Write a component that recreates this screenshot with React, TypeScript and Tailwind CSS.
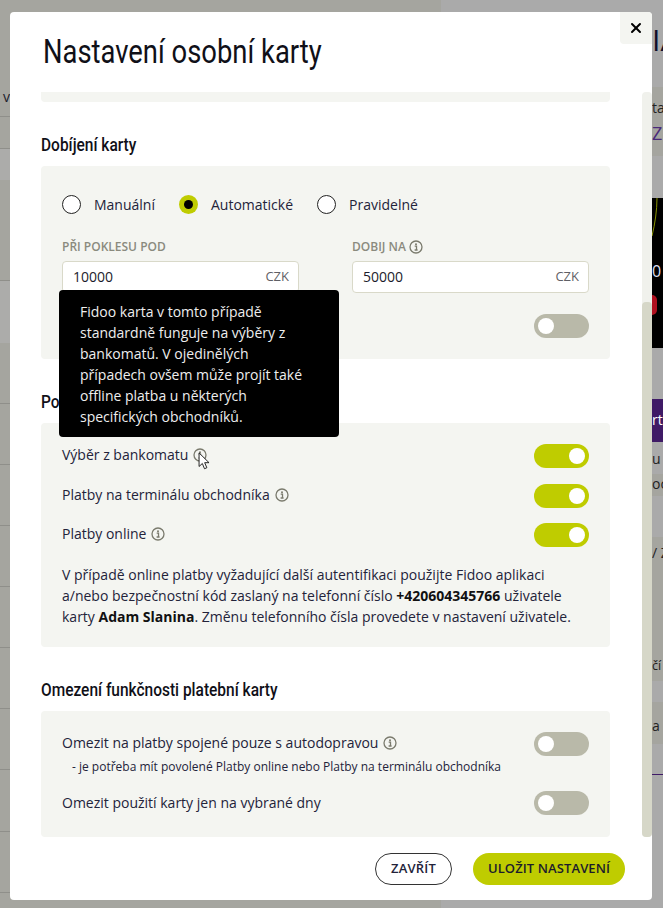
import React from "react";
import { X } from "lucide-react";

const InfoIcon = ({ className = "" }: { className?: string }) => (
  <svg viewBox="0 0 14 14" className={`w-[14px] h-[14px] inline-block flex-shrink-0 ${className}`} fill="none">
    <circle cx="7" cy="7" r="6" stroke="#7a7a6d" strokeWidth="1.3" />
    <circle cx="7" cy="4.2" r="1" fill="#7a7a6d" />
    <path d="M5.7 6.2H7.5V9.7M5.6 10H8.6" stroke="#7a7a6d" strokeWidth="1.3" />
  </svg>
);

const Toggle = ({ on = false }: { on?: boolean }) => (
  <div className={`w-[55px] h-[24px] rounded-full flex items-center px-1 flex-shrink-0 ${on ? "bg-[#bfcc00] justify-end" : "bg-[#b9b9a9] justify-start"}`}>
    <div className="w-4 h-4 rounded-full bg-white" />
  </div>
);

const Radio = ({ label, checked = false }: { label: string; checked?: boolean }) => (
  <div className="flex items-center gap-[13px]">
    {checked ? (
      <div className="w-[19px] h-[19px] rounded-full bg-[#bfcc00] flex items-center justify-center">
        <div className="w-[9px] h-[9px] rounded-full bg-black" />
      </div>
    ) : (
      <div className="w-[19px] h-[19px] rounded-full border border-[#222] bg-white" />
    )}
    <span className="text-sm text-[#23233a] pt-px">{label}</span>
  </div>
);

const AmountField = ({ value }: { value: string }) => (
  <div className="h-8 mt-[6px] bg-white border border-[#d9d9c9] rounded-[4px] flex items-center justify-between pl-[10px] pr-[9px]">
    <span className="text-sm text-[#1c1c2c]">{value}</span>
    <span className="text-[13px] text-[#5f5f66] pb-px">CZK</span>
  </div>
);

const SectionTitle = ({ children }: { children: React.ReactNode }) => (
  <h2 className="h-6 mt-[30px] mb-[10px] flex items-center whitespace-nowrap">
    <span className="text-[18px] font-medium text-[#101018] font-['Roboto',sans-serif] origin-left scale-x-[0.86]">{children}</span>
  </h2>
);

const SettingRow = ({ label, info = true, on = false, className = "" }: { label: string; info?: boolean; on?: boolean; className?: string }) => (
  <div className={`flex items-center justify-between h-6 ${className}`}>
    <div className="flex items-center gap-[5px] text-sm text-[#23233a] pb-[2px]">
      {label}
      {info && <InfoIcon />}
    </div>
    <Toggle on={on} />
  </div>
);

function PageBehind() {
  const leftRows = [
    "h-[117px] border-b", "h-[32px] border-b", "h-[31px] bg-[#acacaa]", "h-[101px] border-b",
    "h-[62px] bg-[#acacaa]", "h-[61px] border-b", "h-[61px] border-b", "h-[61px] border-b", "h-[61px] border-b",
    "h-[61px] border-b", "h-[61px] border-b", "h-[61px] border-b", "h-[62px] border-b", "h-[61px] border-b",
  ];
  return (
    <div className="absolute inset-0 flex bg-[#aaaaaa]">
      <div className="w-[441px] bg-[#a5a59f] flex flex-col">
        {leftRows.map((row, i) => (
          <div key={i} className={`${row} border-[#8f8f8a] pl-[3px] flex-shrink-0 text-sm text-[#1c1c2c]`}>
            {i === 0 && <div className="pt-[87px]">v</div>}
          </div>
        ))}
      </div>
      <div className="flex-1" />
      <div className="w-[11px] flex flex-col overflow-hidden text-[#222] text-sm whitespace-nowrap">
        <div className="h-[87px] pt-[22px] text-[30px] leading-[36px] text-[#10102a]">IA</div>
        <div className="h-[69px] bg-[#a5a59f] pt-[11px] leading-[20px]">
          <div>ta</div>
          <div className="text-[#4a2a7a] text-[18px] leading-[24px] pt-[3px]">Z</div>
        </div>
        <div className="h-[42px]" />
        <div className="h-[150px] bg-black relative">
          <svg viewBox="0 0 11 40" className="absolute left-0 top-0 w-[11px] h-10" fill="none">
            <path d="M5 0C5 12 3 26 0 38" stroke="#8a9400" strokeWidth="1" />
          </svg>
          <div className="text-[#dde] text-[16px] pt-[62px]">0</div>
          <div className="absolute left-0 top-[97px] w-[5px] h-[20px] rounded-r-full bg-[#b01020]" />
        </div>
        <div className="h-[51px]" />
        <div className="h-[43px] bg-[#3f1a66] text-white pt-[11px]">rt</div>
        <div className="h-[32px] pt-[7px]">u</div>
        <div className="h-[22px] bg-[#a5a59f]">oc</div>
        <div className="h-[41px]" />
        <div className="h-[144px] bg-[#a5a59f] pt-[6px]">
          <div>/ Z</div>
          <div className="pt-[94px] text-[12.5px]">čí</div>
        </div>
        <div className="h-[21px]" />
        <div className="h-[42px] bg-[#a5a59f] pt-[14px]">a</div>
        <div className="h-[31px] border-b border-[#3f1a66]" />
      </div>
    </div>
  );
}

export default function App() {
  return (
    <div className="relative w-[663px] h-[908px] overflow-hidden font-['Open_Sans',sans-serif]">
      <PageBehind />

      <div className="absolute left-[10px] top-[12px] w-[642px] h-[888px] bg-white rounded-[4px] flex flex-col">
        {/* Header */}
        <div className="h-[80px] pl-[33px] pt-[18px] flex-shrink-0">
          <h1 className="text-[33px] leading-[44px] text-[#101018] font-['Roboto',sans-serif] origin-left scale-x-[0.83] whitespace-nowrap">Nastavení osobní karty</h1>
        </div>
        <button className="absolute right-0 top-0 w-8 h-8 bg-[#f4f5f1] rounded-tr-[4px] rounded-bl-[4px] flex items-center justify-center">
          <X className="w-4 h-4 text-black" strokeWidth={3} />
        </button>

        {/* Scrollable body */}
        <div className="h-[745px] flex flex-shrink-0">
          <div className="flex-1 pl-[31px] pr-[32px]">
            <div className="h-[10px] bg-[#f4f5f1] rounded-b-[4px]" />

            <SectionTitle>Dobíjení karty</SectionTitle>
            <div className="h-[193px] bg-[#f4f5f1] rounded-[4px] px-[21px] pt-[28px]">
              <div className="flex items-center gap-[24px] h-5">
                <Radio label="Manuální" />
                <Radio label="Automatické" checked />
                <Radio label="Pravidelné" />
              </div>
              <div className="grid grid-cols-2 gap-x-[53px] mt-[25px]">
                <div>
                  <div className="h-4 flex items-center text-xs font-semibold text-[#8a8a7e]">PŘI POKLESU POD</div>
                  <AmountField value="10000" />
                </div>
                <div>
                  <div className="h-4 flex items-center gap-[3px] text-xs font-semibold text-[#8a8a7e]">DOBIJ NA <InfoIcon /></div>
                  <AmountField value="50000" />
                </div>
              </div>
              <div className="flex justify-end mt-[21px]">
                <Toggle />
              </div>
            </div>

            <SectionTitle>Povolené platby</SectionTitle>
            <div className="h-[224px] bg-[#f4f5f1] rounded-[4px] px-[21px] pt-[21px]">
              <SettingRow label="Výběr z bankomatu" on />
              <SettingRow label="Platby na terminálu obchodníka" on className="mt-4" />
              <SettingRow label="Platby online" on className="mt-[15px]" />
              <p className="mt-[17px] text-sm leading-[21px] text-[#23233a]">
                V případě online platby vyžadující další autentifikaci použijte Fidoo aplikaci a/nebo bezpečnostní kód zaslaný na telefonní číslo <b className="text-[#111]">+420604345766</b> uživatele karty <b className="text-[#111]">Adam Slanina</b>. Změnu telefonního čísla provedete v nastavení uživatele.
              </p>
            </div>

            <SectionTitle>Omezení funkčnosti platební karty</SectionTitle>
            <div className="h-[126px] bg-[#f4f5f1] rounded-[4px] px-[21px] pt-[21px]">
              <SettingRow label="Omezit na platby spojené pouze s autodopravou" />
              <div className="mt-[3px] h-4 pl-[10px] flex items-center text-xs text-[#23233a] whitespace-nowrap">- je potřeba mít povolené Platby online nebo Platby na terminálu obchodníka</div>
              <div className="flex items-center justify-between h-6 mt-4 text-sm text-[#23233a]">
                Omezit použití karty jen na vybrané dny
                <Toggle />
              </div>
            </div>
          </div>

          {/* Scrollbar */}
          <div className="w-[10px] bg-[#f0f1ec] rounded-[4px] flex flex-col justify-end">
            <div className="h-[535px] bg-[#d6d7c8] rounded-[4px]" />
          </div>
        </div>

        {/* Footer */}
        <div className="flex-1 flex justify-end items-start gap-[21px] pt-4 pr-[27px]">
          <button className="w-[77px] h-8 rounded-full border border-[#333] bg-white text-[13px] font-semibold tracking-[0.2px] text-[#23233a]">ZAVŘÍT</button>
          <button className="w-[152px] h-8 rounded-full bg-[#bfcc00] text-[13px] font-semibold tracking-[0.1px] text-[#1c1c2c]">ULOŽIT NASTAVENÍ</button>
        </div>
      </div>

      {/* Tooltip */}
      <div className="absolute left-[59px] top-[290px] w-[280px] h-[147px] bg-black rounded-[4px] px-[21px] pt-[11px] text-sm leading-[21px] text-[#eeeeee]">
        Fidoo karta v tomto případě standardně funguje na výběry z bankomatů. V ojedinělých případech ovšem může projít také offline platba u některých specifických obchodníků.
      </div>

      {/* Mouse cursor */}
      <svg viewBox="0 0 14 21" className="absolute left-[198px] top-[452px] w-[13px] h-[19px]">
        <path d="M1 1V16L4.6 12.7L7 18.5L9.6 17.4L7.2 11.8H12Z" fill="#fff" stroke="#111" strokeWidth="1" strokeLinejoin="round" />
      </svg>
    </div>
  );
}
